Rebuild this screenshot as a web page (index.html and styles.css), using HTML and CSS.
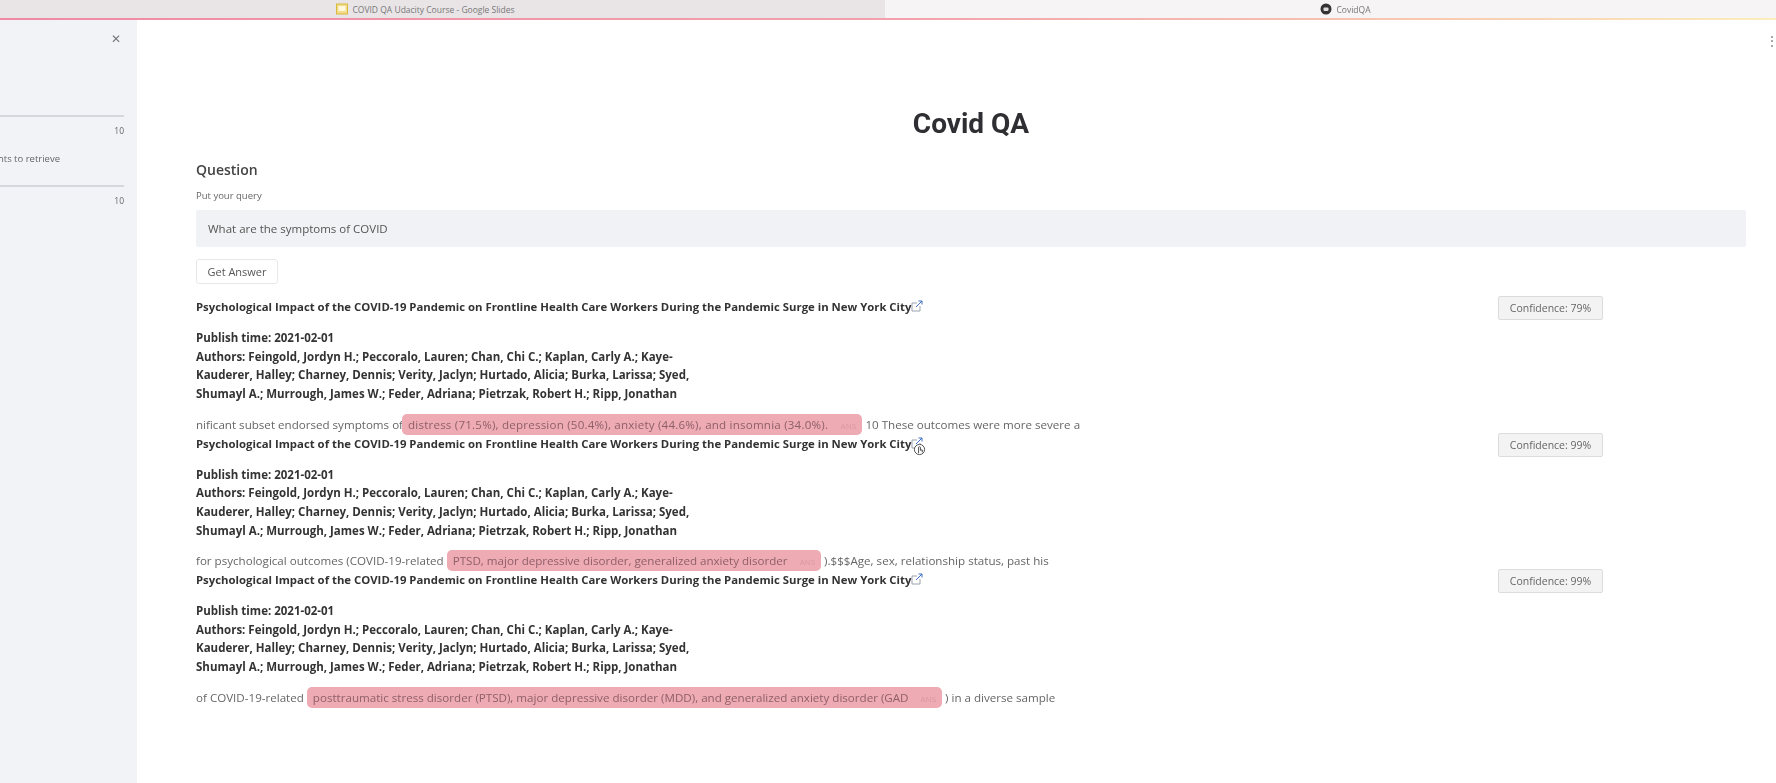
FILE: index.html
```html
<!DOCTYPE html>
<html lang="en">
<head>
    <meta charset="UTF-8">
    <title>CovidQA</title>
    <link rel="stylesheet" href="styles.css">
</head>
<body>
    <div class="tabbar">
        <div class="tab tab-inactive">
            <svg class="tab-icon" viewBox="0 0 12 12"><rect x="0.5" y="1" width="11" height="10" fill="#f3dc8c" stroke="#d8b93a"/><rect x="2.5" y="3" width="7" height="5" fill="#fff8dc"/></svg>
            <span>COVID QA Udacity Course - Google Slides</span>
        </div>
        <div class="tab tab-active">
            <svg class="tab-icon" viewBox="0 0 12 12"><circle cx="6" cy="6" r="5.5" fill="#333"/><rect x="3.5" y="4.5" width="5" height="3.5" rx="1" fill="#ddd"/></svg>
            <span>CovidQA</span>
        </div>
    </div>
    <div class="tab-line"></div>

    <div class="app">
        <aside class="sidebar">
            <div class="close">&#10005;</div>
            <div class="side-clip side-top">s</div>
            <div class="slider-line"></div>
            <div class="slider-max">10</div>
            <div class="side-clip side-label">Number of documents to retrieve</div>
            <div class="slider-line"></div>
            <div class="slider-max">10</div>
        </aside>

        <main class="main">
            <div class="menu-dots">&#8942;</div>
            <h1>Covid QA</h1>
            <h3 class="section">Question</h3>
            <div class="field-label">Put your query</div>
            <div class="query">What are the symptoms of COVID</div>
            <button class="ask">Get Answer</button>

            <div class="result">
                <div class="result-body">
                    <div class="doc-title">Psychological Impact of the COVID-19 Pandemic on Frontline Health Care Workers During the Pandemic Surge in New York City<svg class="ext" viewBox="0 0 12 12"><path d="M1 3h5M1 3v8h8V6" fill="none" stroke="#9aa3ad"/><path d="M5 7l6-6M7.500 1H11v3.500" fill="none" stroke="#3f6fc4"/></svg></div>
                    <div class="meta">
                        Publish time: 2021-02-01<br>
                        Authors: Feingold, Jordyn H.; Peccoralo, Lauren; Chan, Chi C.; Kaplan, Carly A.; Kaye-<br>
                        Kauderer, Halley; Charney, Dennis; Verity, Jaclyn; Hurtado, Alicia; Burka, Larissa; Syed,<br>
                        Shumayl A.; Murrough, James W.; Feder, Adriana; Pietrzak, Robert H.; Ripp, Jonathan
                    </div>
                    <div class="snippet">nificant subset endorsed symptoms of <mark class="mark-wide">distress (71.5%), depression (50.4%), anxiety (44.6%), and insomnia (34.0%). <span class="tag">ANS</span></mark> 10 These outcomes were more severe a</div>
                </div>
                <div class="confidence">Confidence: 79%</div>
            </div>

            <div class="result">
                <div class="result-body">
                    <div class="doc-title">Psychological Impact of the COVID-19 Pandemic on Frontline Health Care Workers During the Pandemic Surge in New York City<svg class="ext" viewBox="0 0 12 12"><path d="M1 3h5M1 3v8h8V6" fill="none" stroke="#9aa3ad"/><path d="M5 7l6-6M7.500 1H11v3.500" fill="none" stroke="#3f6fc4"/></svg><svg class="cursor" viewBox="0 0 14 14"><circle cx="7" cy="7" r="5.500" fill="#fff" stroke="#444"/><path d="M6 11V4.500q1-1.200 2 0V8M8 7.500h2V10" fill="none" stroke="#444"/></svg></div>
                    <div class="meta">
                        Publish time: 2021-02-01<br>
                        Authors: Feingold, Jordyn H.; Peccoralo, Lauren; Chan, Chi C.; Kaplan, Carly A.; Kaye-<br>
                        Kauderer, Halley; Charney, Dennis; Verity, Jaclyn; Hurtado, Alicia; Burka, Larissa; Syed,<br>
                        Shumayl A.; Murrough, James W.; Feder, Adriana; Pietrzak, Robert H.; Ripp, Jonathan
                    </div>
                    <div class="snippet">for psychological outcomes (COVID-19-related <mark>PTSD, major depressive disorder, generalized anxiety disorder <span class="tag">ANS</span></mark> ).$$$Age, sex, relationship status, past his</div>
                </div>
                <div class="confidence">Confidence: 99%</div>
            </div>

            <div class="result">
                <div class="result-body">
                    <div class="doc-title">Psychological Impact of the COVID-19 Pandemic on Frontline Health Care Workers During the Pandemic Surge in New York City<svg class="ext" viewBox="0 0 12 12"><path d="M1 3h5M1 3v8h8V6" fill="none" stroke="#9aa3ad"/><path d="M5 7l6-6M7.500 1H11v3.500" fill="none" stroke="#3f6fc4"/></svg></div>
                    <div class="meta">
                        Publish time: 2021-02-01<br>
                        Authors: Feingold, Jordyn H.; Peccoralo, Lauren; Chan, Chi C.; Kaplan, Carly A.; Kaye-<br>
                        Kauderer, Halley; Charney, Dennis; Verity, Jaclyn; Hurtado, Alicia; Burka, Larissa; Syed,<br>
                        Shumayl A.; Murrough, James W.; Feder, Adriana; Pietrzak, Robert H.; Ripp, Jonathan
                    </div>
                    <div class="snippet">of COVID-19-related <mark>posttraumatic stress disorder (PTSD), major depressive disorder (MDD), and generalized anxiety disorder (GAD <span class="tag">ANS</span></mark> ) in a diverse sample</div>
                </div>
                <div class="confidence">Confidence: 99%</div>
            </div>
        </main>
    </div>
</body>
</html>
```

FILE: styles.css
```css
html, body {
    height: 100%;
}
body {
    font-family: "Open Sans", "Noto Sans", sans-serif;
    margin: 0;
    padding: 0;
    height: 783px;
    overflow: hidden;
    background-color: #fff;
    color: #333;
    display: flex;
    flex-direction: column;
    filter: blur(0.7px);
}

/* browser tabs */
.tabbar {
    display: flex;
    height: 18px;
    font-size: 8.500px;
    color: #777;
}
.tab {
    flex: 1;
    display: flex;
    align-items: center;
    justify-content: center;
    gap: 4px;
}
.tab-inactive {
    flex: 0 0 885px;
    background-color: #e9e5e7;
    padding-right: 34px;
    box-sizing: border-box;
}
.tab-active {
    background-color: #f6f4f4;
    padding-left: 30px;
}
.tab-icon {
    width: 12px;
    height: 12px;
}
.tab-line {
    height: 2px;
    background: linear-gradient(to right, #f08aa4 0%, #f3a0ac 50%, #f8c8b0 80%, #fbeebc 100%);
}

.app {
    flex: 1;
    display: flex;
    min-height: 0;
}

/* sidebar, its left part is cut off in the picture */
.sidebar {
    flex: 0 0 137px;
    background-color: #f1f3f7;
    overflow: hidden;
    padding-right: 13px;
    box-sizing: border-box;
    color: #666;
}
.close {
    text-align: right;
    font-size: 12px;
    line-height: 14px;
    margin-top: 12px;
    padding-right: 3px;
    color: #777;
}
.side-clip {
    display: flex;
    justify-content: flex-end;
    white-space: nowrap;
    font-size: 9.500px;
    line-height: 12px;
}
.side-top {
    margin-top: 47px;
    margin-right: 124px;
    color: #888;
}
.side-label {
    margin-top: 16px;
    margin-right: 64px;
}
.slider-line {
    height: 2px;
    background-color: #d5d7dc;
}
.side-top + .slider-line {
    margin-top: 10px;
}
.side-label + .slider-line {
    margin-top: 20px;
}
.slider-max {
    text-align: right;
    font-size: 8.500px;
    line-height: 12px;
    margin-top: 8px;
}

.main {
    flex: 1;
    position: relative;
    padding: 84px 30px 0 59px;
    min-width: 0;
}
.menu-dots {
    position: absolute;
    top: 12px;
    right: -2px;
    font-size: 12px;
    color: #777;
}
h1 {
    margin: 0 0 16px;
    text-align: center;
    font-family: Roboto, sans-serif;
    font-size: 28px;
    line-height: 40px;
    font-weight: 700;
    color: #2f2f33;
}
.section {
    margin: 0 0 9px;
    font-size: 14px;
    line-height: 20px;
    font-weight: 600;
    color: #444;
}
.field-label {
    font-size: 9.500px;
    line-height: 14px;
    margin-bottom: 7px;
    color: #666;
}
.query {
    height: 37px;
    line-height: 37px;
    padding-left: 12px;
    background-color: #f1f2f5;
    font-size: 11.500px;
    color: #555;
    border-radius: 2px;
}
.ask {
    display: block;
    margin-top: 12px;
    height: 25px;
    width: 82px;
    padding: 0;
    background: #fff;
    border: 1px solid #e8e8ea;
    border-radius: 3px;
    font-family: inherit;
    font-size: 11px;
    color: #555;
}

.result {
    display: flex;
    justify-content: space-between;
    align-items: flex-start;
    height: 136.500px;
    padding-right: 143px;
}
.ask + .result {
    margin-top: 14px;
}
.doc-title {
    position: relative;
    width: fit-content;
    font-size: 11.350px;
    line-height: 18px;
    font-weight: 700;
    white-space: nowrap;
}
.ext {
    width: 12px;
    height: 12px;
    vertical-align: -1px;
}
.cursor {
    position: absolute;
    right: -3px;
    top: 8px;
    width: 13px;
    height: 13px;
}
.meta {
    margin-top: 13px;
    font-size: 11.500px;
    line-height: 18.700px;
    font-weight: 700;
    white-space: nowrap;
}
.snippet {
    margin-top: 12px;
    font-size: 11.600px;
    line-height: 18px;
    color: #666;
    white-space: nowrap;
}
mark {
    background-color: #eeabb4;
    color: #8f6068;
    padding: 3px 6px;
    border-radius: 5px;
}
.mark-wide {
    margin-left: -4px;
    letter-spacing: 0.2px;
}
.tag {
    font-size: 8px;
    color: #dd969f;
    margin-left: 9px;
}
.confidence {
    margin-top: -2px;
    width: 105px;
    height: 24px;
    line-height: 22px;
    box-sizing: border-box;
    text-align: center;
    font-size: 10.500px;
    color: #666;
    background-color: #f3f3f4;
    border: 1px solid #dcdcde;
    border-radius: 2px;
}
```
